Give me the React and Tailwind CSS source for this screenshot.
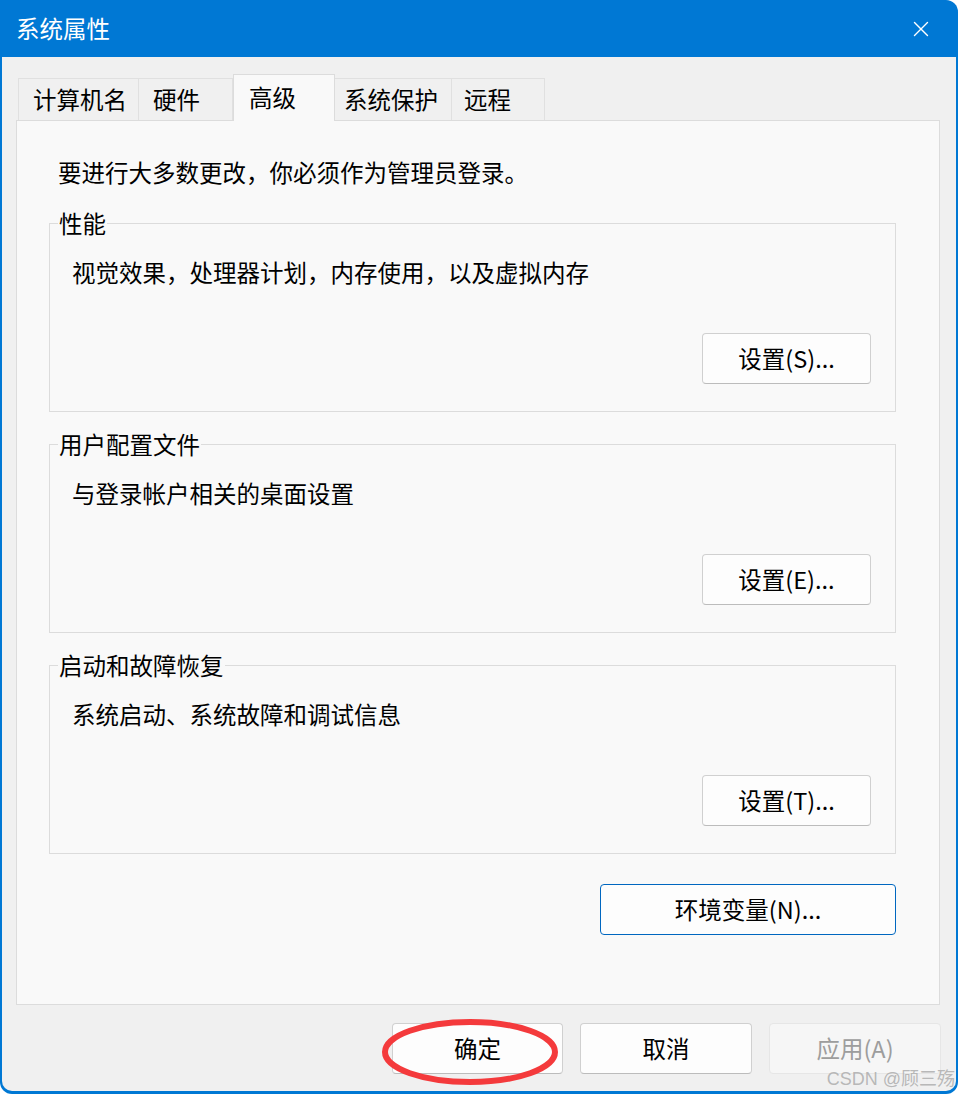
import { X } from "lucide-react";

const font = {
  fontFamily: '"Noto Sans CJK SC", "Noto Sans", sans-serif',
};

const tabs = [
  { label: "计算机名", w: "w-[121px]", pl: "pl-[14px]" },
  { label: "硬件", w: "w-[95px]", pl: "pl-[14px]" },
  { label: "高级", w: "w-[102px]", pl: "pl-[15px]", active: true },
  { label: "系统保护", w: "w-[118px]", pl: "pl-[9px]" },
  { label: "远程", w: "w-[94px]", pl: "pl-[12px]" },
];

const groups = [
  { title: "性能", desc: "视觉效果，处理器计划，内存使用，以及虚拟内存", button: "设置(S)..." },
  { title: "用户配置文件", desc: "与登录帐户相关的桌面设置", button: "设置(E)..." },
  { title: "启动和故障恢复", desc: "系统启动、系统故障和调试信息", button: "设置(T)..." },
];

function Group({ title, desc, button, first }) {
  return (
    <fieldset
      className={`border border-[#dcdcdc] px-[22px] pb-[27px] ${first ? "mt-[21px]" : "mt-[18px]"}`}
    >
      <legend className="-ml-[14px] px-[1px] h-[28px] leading-[28px] text-[23.5px] text-black">
        {title}
      </legend>
      <p className="mt-[19px] h-[32px] leading-[32px] text-[23.5px] text-black">{desc}</p>
      <div className="flex justify-end mt-[45px] pr-[2px]">
        <button className="w-[169px] h-[51px] rounded-[4px] border border-[#d0d0d0] border-b-[#bcbcbc] bg-[#fdfdfd] text-[23.5px] text-black leading-none">
          {button}
        </button>
      </div>
    </fieldset>
  );
}

export default function App() {
  return (
    <div className="relative w-[958px] h-[1094px] bg-white" style={font}>
      <div className="flex flex-col w-[958px] h-[1094px] bg-[#0078d4] rounded-tr-[12px] rounded-b-[12px]">
        {/* 标题栏 */}
        <div className="flex items-center justify-between h-[57px] pl-[16px] pr-[24px]">
          <span className="text-white text-[23.5px] leading-none">系统属性</span>
          <X className="w-[26px] h-[26px] text-white" strokeWidth={1.3} />
        </div>

        {/* 窗口主体 */}
        <div className="flex flex-col flex-1 mx-[2px] mb-[3px] bg-[#f0f0f0] rounded-b-[10px] pt-[17px] pl-[14px] pr-[16px]">
          <div className="flex items-end h-[46px] pl-[2px]">
            {tabs.map((t) => (
              <div
                key={t.label}
                className={`${t.w} ${t.pl} flex items-center text-[23.5px] text-black ${
                  t.active
                    ? "h-[47px] bg-[#f9f9f9] border border-b-0 border-[#dcdcdc] -mb-[1px] relative z-10"
                    : "h-[42px] bg-[#f0f0f0] border border-b-0 border-[#e0e0e0] -ml-[1px] first:ml-0"
                }`}
              >
                {t.label}
              </div>
            ))}
          </div>

          {/* 选项卡内容 */}
          <div className="flex flex-col h-[885px] bg-[#f9f9f9] border border-[#dcdcdc] pt-[35px] pl-[32px] pr-[43px]">
            <p className="pl-[9px] h-[32px] leading-[32px] text-[23.5px] text-black">
              要进行大多数更改，你必须作为管理员登录。
            </p>
            {groups.map((g, i) => (
              <Group key={g.title} {...g} first={i === 0} />
            ))}
            <div className="flex justify-end mt-[30px]">
              <button className="w-[296px] h-[51px] rounded-[4px] border border-[#0067c0] bg-[#fdfdfd] text-[23.5px] text-black leading-none">
                环境变量(N)...
              </button>
            </div>
          </div>

          {/* 底部按钮 */}
          <div className="flex justify-end gap-[17px] mt-[18px] -mr-[1px]">
            <button className="w-[171px] h-[51px] rounded-[4px] border border-[#d0d0d0] border-b-[#bcbcbc] bg-[#fdfdfd] text-[23.5px] text-black leading-none">
              确定
            </button>
            <button className="w-[172px] h-[51px] rounded-[4px] border border-[#d0d0d0] border-b-[#bcbcbc] bg-[#fdfdfd] text-[23.5px] text-black leading-none">
              取消
            </button>
            <button className="w-[172px] h-[51px] rounded-[4px] border border-[#e6e6e6] bg-[#f6f6f6] text-[23.5px] text-[#9d9d9d] leading-none">
              应用(A)
            </button>
          </div>
        </div>
      </div>

      {/* 红色圈注 */}
      <svg
        className="absolute left-[380px] top-[1017px] pointer-events-none"
        width="182"
        height="70"
        viewBox="0 0 182 70"
      >
        <ellipse cx="90" cy="35" rx="85" ry="30" fill="none" stroke="#f43a3c" strokeWidth="6" />
      </svg>

      {/* 水印 */}
      <span
        className="absolute right-[3px] bottom-[6px] text-[18px] leading-none text-[#b0b0b0]/90"
        style={{ fontFamily: '"Liberation Sans", "Noto Sans CJK SC", sans-serif' }}
      >
        CSDN @顾三殇
      </span>
    </div>
  );
}
